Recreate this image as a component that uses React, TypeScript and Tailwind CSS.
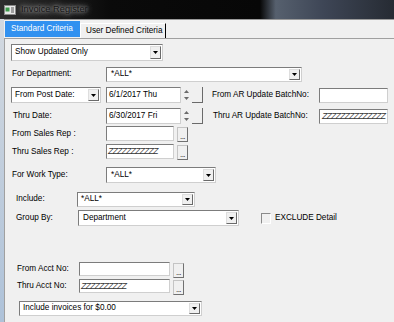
import type { ReactNode } from 'react'

const sunken = 'bg-white border border-[#7c7c7c] border-b-[#cfcfcf] border-r-[#cfcfcf]'

const Arrow = () => (
  <svg width="5" height="3" viewBox="0 0 5 3">
    <path d="M0 0h5L2.5 3z" fill="#000" />
  </svg>
)

function Combo({ className, text, pad = 'pl-[3px]' }: { className: string; text: string; pad?: string }) {
  return (
    <div className={`flex ${sunken} ${className}`}>
      <span className={`flex-1 flex items-center whitespace-nowrap overflow-hidden ${pad}`}>{text}</span>
      <span className="my-[1px] mr-[1px] w-[11px] flex items-center justify-center bg-[#f0f0f0] border border-[#dedede] border-r-[#6a6a6a] border-b-[#6a6a6a]">
        <Arrow />
      </span>
    </div>
  )
}

function Field({ className, children }: { className: string; children?: ReactNode }) {
  return (
    <div className={`flex items-center whitespace-nowrap overflow-hidden ${sunken} ${className}`}>
      {children}
    </div>
  )
}

// value shown as a run of Z's (the "thru" end of a range)
const Zs = ({ n }: { n: number }) => (
  <span className="italic text-[9px] leading-none text-[#333] tracking-[-1px]">{'Z'.repeat(n)}</span>
)

const Dots = () => (
  <div className="w-[11px] h-[15px] mt-[1px] ml-[3px] flex items-end justify-center bg-[#f0f0f0] border border-[#c4c4c4] border-r-[#707070] border-b-[#707070] text-[8px] leading-[9px] tracking-[-0.5px]">
    ...
  </div>
)

const Spinner = () => (
  <svg width="7" height="16" viewBox="0 0 7 16" className="ml-[2px]">
    <path d="M1 6l2.5-3L6 6z" fill="#6a6a6a" />
    <path d="M1 10l2.5 3L6 10z" fill="#6a6a6a" />
  </svg>
)

const Bracket = () => <div className="ml-[2px] w-[11px] h-[16px] border-r border-b border-[#6a6a6a]" />

function TitleBar() {
  return (
    <div className="h-[19px] shrink-0 flex items-center bg-[linear-gradient(90deg,#2e2e2e_0%,#1c1c1c_14%,#0a0a0a_28%,#070707_66%,#56606e_70%,#3e4656_82%,#262b33_100%)]">
      <svg width="12" height="10" viewBox="0 0 12 10" className="ml-[4px]">
        <rect x="0.5" y="0.5" width="11" height="9" fill="#e8e8e8" stroke="#8a8a8a" />
        <rect x="1.5" y="2.5" width="4" height="4" fill="#3c9a4a" />
        <path d="M7 3h3M7 5h3M7 7h3" stroke="#555" strokeWidth="1" />
      </svg>
      <span className="ml-[5px] text-[9.3px] text-[#151515] [text-shadow:0_0_7px_rgba(255,255,255,0.55),0_0_7px_rgba(255,255,255,0.55),0_0_3px_rgba(255,255,255,0.45)]">
        Invoice Register
      </span>
    </div>
  )
}

function Tabs() {
  return (
    <div className="h-[20px] shrink-0 flex items-end border-t border-[#9a9a9a] border-b border-b-[#a0a0a0]">
      <div className="ml-[1px] w-[75px] h-[16px] mb-[1px] flex items-center pl-[6px] bg-[#3191f0] text-white">
        Standard Criteria
      </div>
      <div className="w-[86px] h-[15px] flex items-center pl-[5px] border-t border-l border-white border-r border-r-black">
        User Defined Criteria
      </div>
    </div>
  )
}

export default function App() {
  return (
    <div className="w-[394px] h-[322px] overflow-hidden flex flex-col bg-[#f0f0f0] text-black text-[8.2px] leading-none font-['Liberation_Sans',Arial,sans-serif]">
      <TitleBar />
      <div className="flex flex-1">
        <div className="w-[4px] bg-[linear-gradient(180deg,#d3d9e0,#aec2d9)]" />
        <div className="flex-1 flex flex-col">
          <Tabs />
          <div className="flex-1 flex flex-col border-l border-[#a0a0a0]">
            <Combo className="mt-[5px] ml-[6px] w-[152px] h-[17px]" text="Show Updated Only" />

            <div className="mt-[6px] h-[15px] flex items-center pl-[7px]">
              <span className="w-[94px]">For Department:</span>
              <Combo className="w-[196px] h-[15px]" text="*ALL*" pad="pl-[4px]" />
            </div>

            <div className="mt-[5px] h-[16px] flex items-center pl-[6px]">
              <Combo className="w-[90px] h-[16px]" text="From Post Date:" />
              <Field className="ml-[5px] w-[75px] h-[16px] pl-[2px]">6/1/2017 Thu</Field>
              <Spinner />
              <Bracket />
              <span className="ml-[9px] w-[107px]">From AR Update BatchNo:</span>
              <Field className="w-[69px] h-[15px]" />
            </div>

            <div className="mt-[5px] h-[16px] flex items-center pl-[8px]">
              <span className="w-[93px]">Thru Date:</span>
              <Field className="w-[75px] h-[16px] pl-[2px]">6/30/2017 Fri</Field>
              <Spinner />
              <Bracket />
              <span className="ml-[10px] w-[106px]">Thru AR Update BatchNo:</span>
              <Field className="w-[69px] h-[15px] pl-[2px]">
                <Zs n={14} />
              </Field>
            </div>

            <div className="mt-[2px] h-[16px] flex items-start pl-[7px]">
              <span className="w-[94px] self-center">From Sales Rep :</span>
              <Field className="w-[68px] h-[15px]" />
              <Dots />
            </div>

            <div className="mt-[2px] h-[16px] flex items-start pl-[7px]">
              <span className="w-[94px] self-center">Thru Sales Rep :</span>
              <Field className="w-[68px] h-[15px] pl-[1px]">
                <Zs n={11} />
              </Field>
              <Dots />
            </div>

            <div className="mt-[7px] h-[16px] flex items-center pl-[7px]">
              <span className="w-[94px]">For Work Type:</span>
              <Combo className="w-[110px] h-[16px]" text="*ALL*" pad="pl-[4px]" />
            </div>

            <div className="mt-[9px] h-[15px] flex items-center pl-[11px]">
              <span className="w-[61px]">Include:</span>
              <Combo className="w-[118px] h-[15px]" text="*ALL*" pad="pl-[3px]" />
            </div>

            <div className="mt-[3px] h-[16px] flex items-center pl-[11px]">
              <span className="w-[62px]">Group By:</span>
              <Combo className="w-[161px] h-[16px]" text="Department" pad="pl-[4px]" />
              <span className="ml-[22px] w-[10px] h-[11px] border border-[#8a8a8a] border-b-white border-r-white" />
              <span className="ml-[4px]">EXCLUDE Detail</span>
            </div>

            <div className="mt-[36px] h-[15px] flex items-start pl-[12px]">
              <span className="w-[62px] self-center">From Acct No:</span>
              <Field className="w-[91px] h-[14px]" />
              <Dots />
            </div>

            <div className="mt-[2px] h-[15px] flex items-start pl-[12px]">
              <span className="w-[62px] self-center">Thru Acct No:</span>
              <Field className="w-[91px] h-[14px] pl-[1px]">
                <Zs n={10} />
              </Field>
              <Dots />
            </div>

            <Combo className="mt-[7px] ml-[14px] w-[183px] h-[15px]" text="Include invoices for $0.00" pad="pl-[3px]" />
          </div>
        </div>
      </div>
    </div>
  )
}
